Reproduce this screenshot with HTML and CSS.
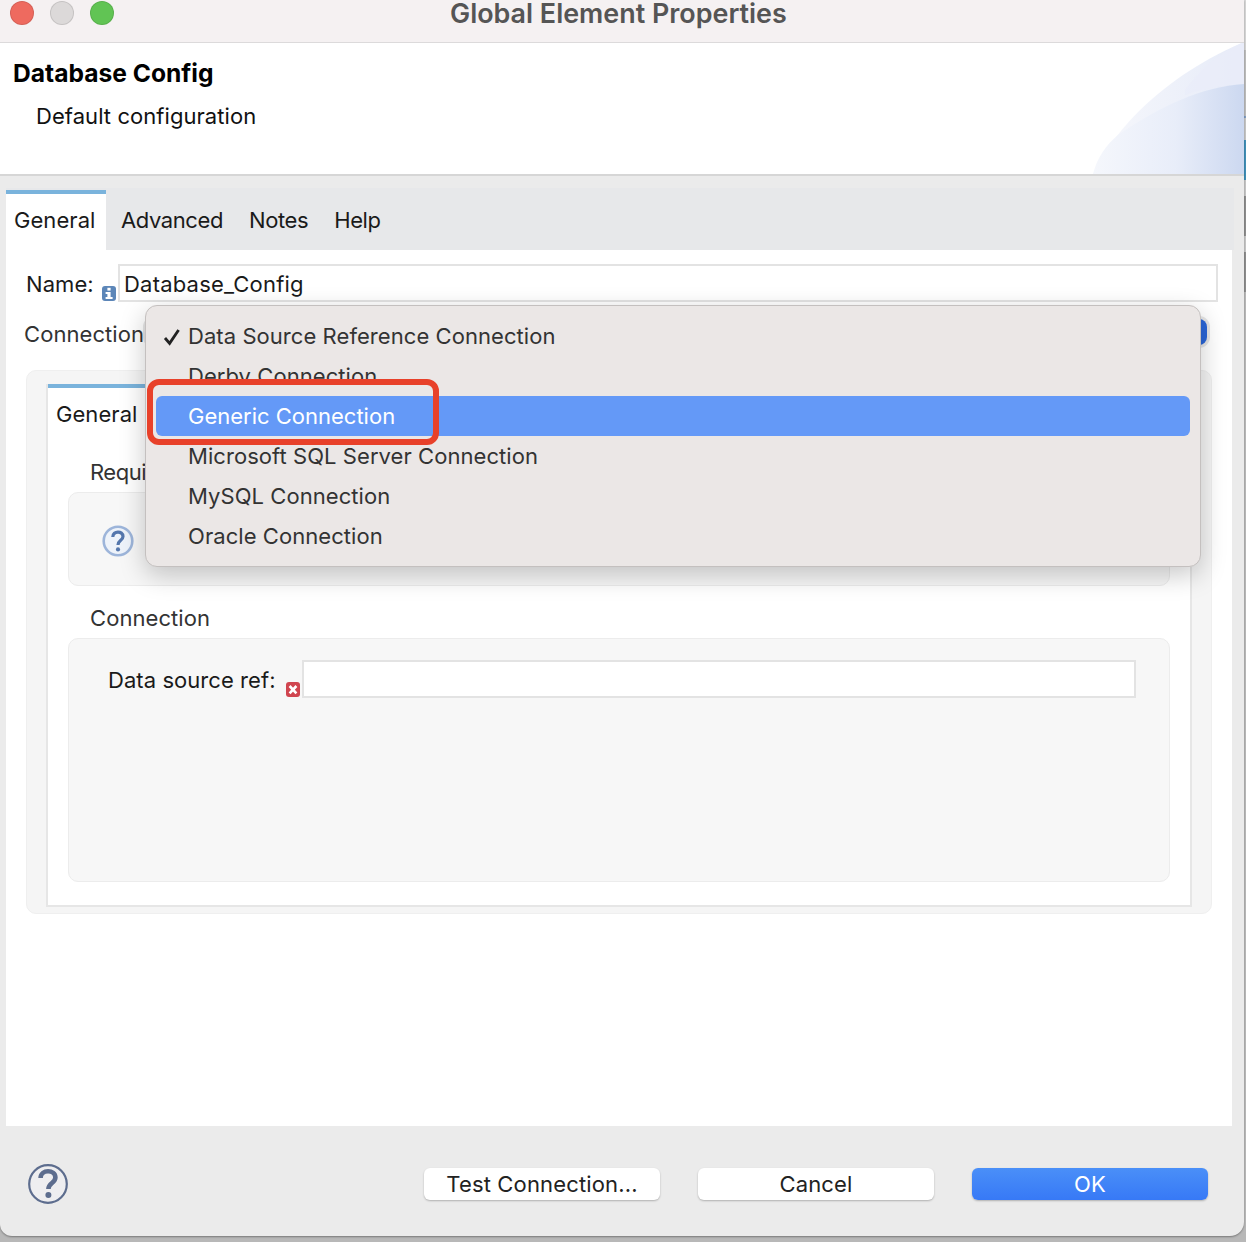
FILE: index.html
```html
<!DOCTYPE html>
<html lang="en">
<head>
  <meta charset="UTF-8">
  <title>Global Element Properties</title>
  <link rel="stylesheet" href="styles.css">
</head>
<body>
  <div class="window">
    <div class="titlebar">
      <span class="light light-red"></span>
      <span class="light light-grey"></span>
      <span class="light light-green"></span>
      <div class="window-title">Global Element Properties</div>
    </div>

    <div class="header">
      <h1>Database Config</h1>
      <p>Default configuration</p>
      <svg class="header-curve" width="152" height="131" viewBox="0 0 152 131">
        <defs>
          <linearGradient id="curveOuter" x1="0" y1="0" x2="1" y2="0">
            <stop offset="0" stop-color="#f7f8fc"/>
            <stop offset="1" stop-color="#e6ebf8"/>
          </linearGradient>
          <linearGradient id="curveBand" x1="0" y1="0" x2="1" y2="0">
            <stop offset="0" stop-color="#f5f7fc"/>
            <stop offset="0.55" stop-color="#e8edf9"/>
            <stop offset="1" stop-color="#ccd8f0"/>
          </linearGradient>
        </defs>
        <path d="M1 131C15 100 60 38 152 -1V131Z" fill="url(#curveOuter)"/>
        <path d="M93 47C105 30 125 10 152 -1V41C130 42 110 46 93 52Z" fill="#e9edf9" opacity="0.7"/>
        <path d="M1 131C5 115 14 102 26 92C70 62 110 44 152 41V131Z" fill="url(#curveBand)"/>
      </svg>
    </div>

    <div class="tabs">
      <div class="tab tab-active">General</div>
      <div class="tab">Advanced</div>
      <div class="tab">Notes</div>
      <div class="tab">Help</div>
    </div>

    <div class="panel">
      <div class="name-row">
        <label class="name-label">Name:</label>
        <svg class="mini-icon" width="14" height="15" viewBox="0 0 14 15">
          <rect width="14" height="15" rx="3" fill="#5c86b8"/>
          <rect x="5.4" y="1.8" width="3.2" height="2.8" fill="#fff"/>
          <path d="M3.6 6H8.6V11H10.6V13H3.6V11H5.4V8H3.6Z" fill="#fff"/>
        </svg>
        <input class="text-input" type="text" value="Database_Config">
      </div>

      <div class="conn-row">
        <label class="conn-label">Connection</label>
        <div class="select-box"></div>
      </div>

      <div class="group">
        <div class="inner-panel">
          <div class="inner-tab">General</div>
          <div class="section-title section-title-tight">Required</div>
          <div class="box box-required">
            <svg class="hint-icon" width="32" height="32" viewBox="0 0 32 32">
              <circle cx="16" cy="16" r="14.3" fill="#eef3fa" stroke="#9db5da" stroke-width="2.6"/>
              <path d="M10.8 12C10.8 5.5 21 5.5 21 11.5C21 15.5 16 15 16 20" fill="none" stroke="#5577ad" stroke-width="3.2"/>
              <circle cx="16" cy="24.4" r="2.1" fill="#5577ad"/>
            </svg>
          </div>
          <div class="section-title">Connection</div>
          <div class="box box-connection">
            <div class="ref-row">
              <label class="ref-label">Data source ref:</label>
              <svg class="mini-icon" width="14" height="15" viewBox="0 0 14 15">
                <rect width="14" height="15" rx="3" fill="#d0454f"/>
                <path d="M3.6 4L10.4 11.4M10.4 4L3.6 11.4" stroke="#fff" stroke-width="2.6" fill="none"/>
              </svg>
              <input class="text-input" type="text">
            </div>
          </div>
        </div>
      </div>

      <div class="menu">
        <div class="menu-item">
          <svg class="check" width="18" height="18" viewBox="0 0 18 18">
            <path d="M2 10L6.6 15.4L15.6 2" fill="none" stroke="#222" stroke-width="2.8"/>
          </svg>
          Data Source Reference Connection
        </div>
        <div class="menu-item menu-item-cut">Derby Connection</div>
        <div class="menu-item menu-item-selected">Generic Connection</div>
        <div class="menu-item">Microsoft SQL Server Connection</div>
        <div class="menu-item">MySQL Connection</div>
        <div class="menu-item">Oracle Connection</div>
      </div>
      <div class="callout"></div>
    </div>

    <div class="footer">
      <svg class="help-icon" width="40" height="40" viewBox="0 0 40 40">
        <circle cx="20" cy="20" r="18.8" fill="#eeeef0" stroke="#5d6d8e" stroke-width="2.2"/>
        <path d="M12.6 14C12.6 5 27.4 5 27.4 13.5C27.4 19 20.4 19 20.4 25" fill="none" stroke="#5d6d8e" stroke-width="4.6"/>
        <circle cx="20.4" cy="31" r="3" fill="#5d6d8e"/>
      </svg>
      <button class="btn">Test Connection...</button>
      <button class="btn">Cancel</button>
      <button class="btn btn-primary">OK</button>
    </div>
  </div>
</body>
</html>
```

FILE: styles.css
```css
* {
  box-sizing: border-box;
}
html, body {
  margin: 0;
  height: 1242px;
  overflow: hidden;
}
body {
  font-family: Inter, "Noto Sans", sans-serif;
  font-size: 22px;
  letter-spacing: 0.06px;
  color: #1a1a1a;
  background: linear-gradient(to bottom,
    #d6d6d6 0 50px, #bcbcbc 50px 116px, #7f9cc0 116px 118px, #c6c6c6 118px 140px,
    #3f8fb8 140px 180px, #c6c6c6 180px 196px, #8e8e8e 196px 236px,
    #c6c6c6 236px 252px, #8e8e8e 252px 292px, #b8b8b8 292px);
}
.window {
  position: relative;
  width: 1244px;
  height: 1236px;
  background: #ebebeb;
  border-radius: 0 0 14px 12px;
  box-shadow: 0 1px 2px rgba(0, 0, 0, 0.35);
  overflow: hidden;
}

/* title bar */
.titlebar {
  display: flex;
  align-items: center;
  height: 43px;
  padding: 0 0 17px 10px;
  background: #f5f1f2;
  border-bottom: 1px solid #dcdadb;
}
.light {
  width: 24px;
  height: 24px;
  margin-right: 16px;
  border-radius: 50%;
  border: 1px solid rgba(0, 0, 0, 0.1);
}
.light-red {
  background: #ee6a5f;
}
.light-grey {
  background: #dcd9d9;
}
.light-green {
  background: #61c454;
}
.window-title {
  margin-left: 320px;
  font-size: 26.9px;
  font-weight: 600;
  line-height: 24px;
  letter-spacing: 0;
  color: #555;
  white-space: nowrap;
}

/* header */
.header {
  position: relative;
  height: 133px;
  padding: 14px 13px 0;
  background: #fff;
  border-bottom: 2px solid #d6d6d6;
}
.header h1 {
  margin: 0;
  font-size: 24.6px;
  font-weight: 700;
  line-height: 32px;
  letter-spacing: 0;
  color: #000;
}
.header p {
  margin: 12px 0 0 23px;
  line-height: 30px;
  color: #111;
}
.header-curve {
  position: absolute;
  right: 0;
  bottom: 0;
}

/* top tabs */
.tabs {
  display: flex;
  height: 62px;
  margin: 12px 10px 0 6px;
  padding-top: 2px;
  background: #e7e8ea;
}
.tab {
  height: 60px;
  padding: 10px 13px 0;
  border-top: 4px solid transparent;
  line-height: 32px;
  letter-spacing: -0.4px;
}
.tab-active {
  width: 100px;
  margin-right: 2px;
  padding: 10px 8px 0;
  background: #fff;
  border-top-color: #7ab3dc;
  letter-spacing: 0.06px;
}

.panel {
  position: relative;
  height: 876px;
  margin: 0 12px 0 6px;
  padding-top: 14px;
  background: #fff;
}
.name-row {
  display: flex;
  gap: 2px;
  height: 38px;
  padding: 0 14px 0 20px;
}
.name-label {
  width: 74px;
  line-height: 40px;
}
.mini-icon {
  align-self: flex-end;
  flex: none;
  margin-bottom: 1px;
}
.text-input {
  flex: 1;
  min-width: 0;
  height: 38px;
  padding: 2px 4px 0;
  border: 2px solid #e3e3e3;
  background: #fff;
  outline: none;
  font-family: inherit;
  font-size: 22px;
  letter-spacing: 0.2px;
  color: #1a1a1a;
}
.conn-row {
  display: flex;
  height: 30px;
  margin-top: 16px;
  padding: 0 25px 0 18px;
}
.conn-label {
  width: 122px;
  line-height: 32px;
  color: #333;
}
.select-box {
  flex: 1;
  height: 26px;
  margin-top: 1px;
  background: #2a66d8;
  border-radius: 8px;
  box-shadow: 0 0 0 3px #e6e6e6;
}

/* nested group */
.group {
  height: 544px;
  margin: 22px 20px 0;
  padding: 13px 20px 8px;
  background: #f5f5f5;
  border: 1px solid #efefef;
  border-radius: 10px;
}
.inner-panel {
  height: 523px;
  margin: 0 -1px;
  background: #fff;
  border: 2px solid #e6e6e6;
  border-top: none;
}
.inner-tab {
  width: 98px;
  height: 56px;
  padding: 10px 8px 0;
  border-top: 4px solid #7ab3dc;
  line-height: 32px;
}
.section-title {
  margin: 16px 0 4px 42px;
  line-height: 32px;
  color: #333;
}
.section-title-tight {
  letter-spacing: -0.5px;
}
.box {
  margin: 0 20px;
  background: #f7f7f7;
  border: 1px solid #ececec;
  border-radius: 10px;
}
.box-required {
  display: flex;
  align-items: center;
  height: 94px;
  padding: 4px 0 0 33px;
}
.box-connection {
  height: 244px;
  padding: 21px 33px 0 39px;
}
.ref-row {
  display: flex;
  gap: 2px;
  height: 38px;
}
.ref-label {
  width: 176px;
  line-height: 40px;
}

/* popup menu over the connection select */
.menu {
  position: absolute;
  left: 139px;
  top: 55px;
  width: 1056px;
  height: 262px;
  padding-top: 10px;
  background: #ebe7e6;
  border: 1px solid #c4c0bf;
  border-radius: 12px;
  box-shadow: 0 8px 26px rgba(0, 0, 0, 0.22);
  color: #333;
}
.menu-item {
  position: relative;
  height: 40px;
  margin: 0 10px;
  padding-left: 32px;
  border-radius: 6px;
  line-height: 40px;
}
.menu-item-cut {
  height: 29px;
  margin-bottom: 11px;
  overflow: hidden;
}
.menu-item-selected {
  background: #6499f7;
  color: #fff;
  letter-spacing: 0;
}
.check {
  position: absolute;
  left: 7px;
  top: 12px;
}
.callout {
  position: absolute;
  left: 141px;
  top: 129px;
  width: 292px;
  height: 66px;
  border: 6px solid #e8412a;
  border-radius: 12px;
}

/* footer buttons */
.footer {
  display: flex;
  align-items: flex-start;
  gap: 38px;
  height: 110px;
  padding: 38px 36px 0 28px;
}
.help-icon {
  margin-right: auto;
}
.btn {
  width: 236px;
  height: 32px;
  margin-top: 4px;
  padding: 0;
  background: #fff;
  border: none;
  border-radius: 6px;
  box-shadow: 0 1px 2px rgba(0, 0, 0, 0.25);
  font-family: inherit;
  font-size: 22px;
  letter-spacing: 0.15px;
  color: #222;
}
.btn-primary {
  background: linear-gradient(to bottom, #4a8ff8, #3779f6);
  color: #fff;
}
```
